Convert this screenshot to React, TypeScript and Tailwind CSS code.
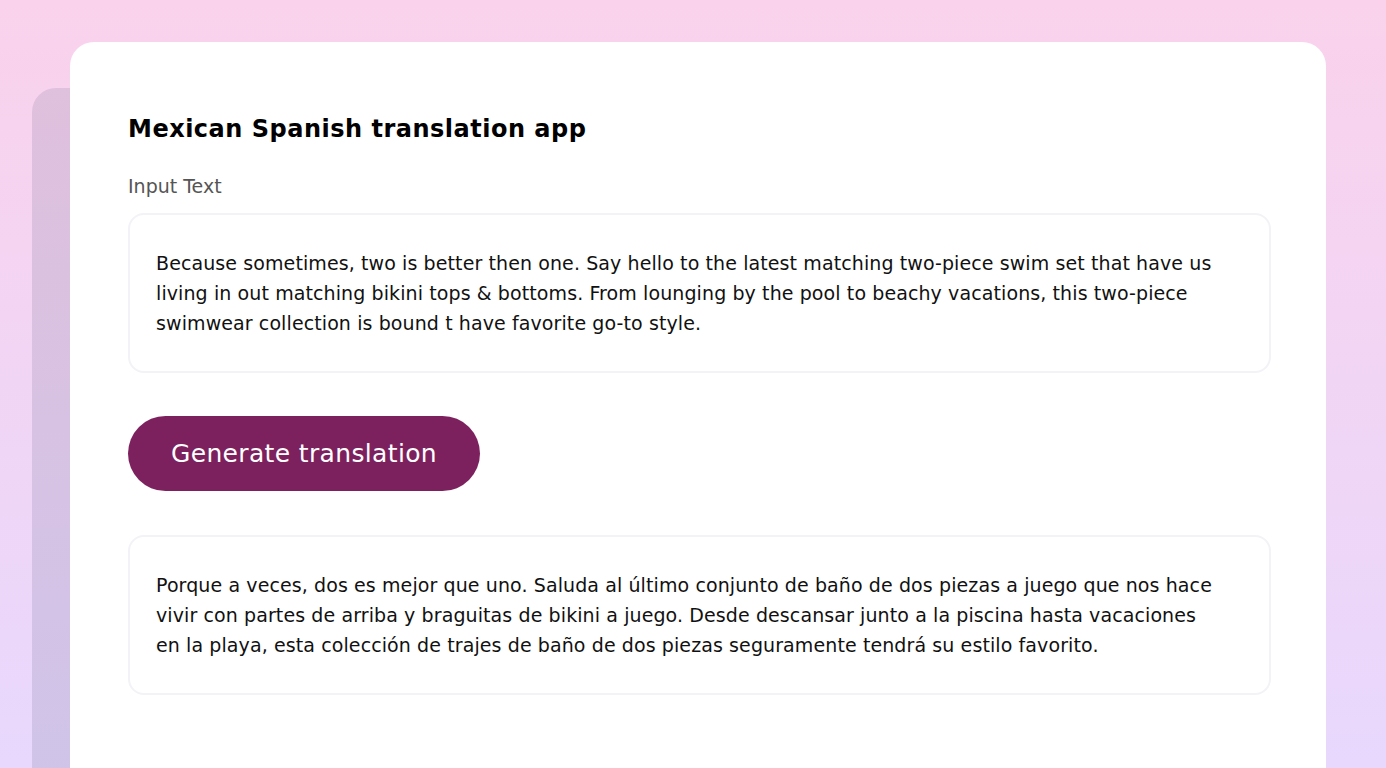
import React from 'react';

const font = { fontFamily: '"DejaVu Sans", "Liberation Sans", sans-serif' };

const inputText = [
  'Because sometimes, two is better then one. Say hello to the latest matching two-piece swim set that have us',
  'living in out matching bikini tops & bottoms. From lounging by the pool to beachy vacations, this two-piece',
  'swimwear collection is bound t have favorite go-to style.',
];

const outputText = [
  'Porque a veces, dos es mejor que uno. Saluda al último conjunto de baño de dos piezas a juego que nos hace',
  'vivir con partes de arriba y braguitas de bikini a juego. Desde descansar junto a la piscina hasta vacaciones',
  'en la playa, esta colección de trajes de baño de dos piezas seguramente tendrá su estilo favorito.',
];

function TextBox({ lines }: { lines: string[] }) {
  return (
    <div className="rounded-2xl border-2 border-[#f3f2f7] bg-white px-[26px] py-[33px]">
      <p className="text-[19px] leading-[30px] tracking-[0.1px] text-[#111111] whitespace-nowrap">
        {lines.map((l, i) => (
          <React.Fragment key={i}>
            {l}
            {i < lines.length - 1 && <br />}
          </React.Fragment>
        ))}
      </p>
    </div>
  );
}

export default function App() {
  return (
    <div
      className="h-screen overflow-hidden bg-gradient-to-b from-[#fad2ec] to-[#e8d8fd] pt-[42px] pl-[70px] pr-[60px]"
      style={font}
    >
      <div className="relative h-full">
        {/* stacked card behind */}
        <div className="absolute left-[-38px] top-[46px] h-[700px] w-[200px] rounded-tl-[24px] bg-gradient-to-b from-[#dfc0dd] to-[#cfc4e9]" />
        <div className="relative h-[760px] rounded-[24px] bg-white px-[58px] pt-[71px]">
          <h1 className="text-[24px] leading-[32px] tracking-[0.5px] font-semibold text-black">
            Mexican Spanish translation app
          </h1>
          <div className="mt-[29px] text-[19px] leading-[24px] text-[#555555]">Input Text</div>
          <div className="mt-[15px] w-[1143px]">
            <TextBox lines={inputText} />
          </div>
          <button className="mt-[43px] h-[75px] w-[352px] rounded-full bg-[#7d215e] text-[25px] tracking-[0.35px] font-medium text-white">
            Generate translation
          </button>
          <div className="mt-[44px] w-[1143px]">
            <TextBox lines={outputText} />
          </div>
        </div>
      </div>
    </div>
  );
}
